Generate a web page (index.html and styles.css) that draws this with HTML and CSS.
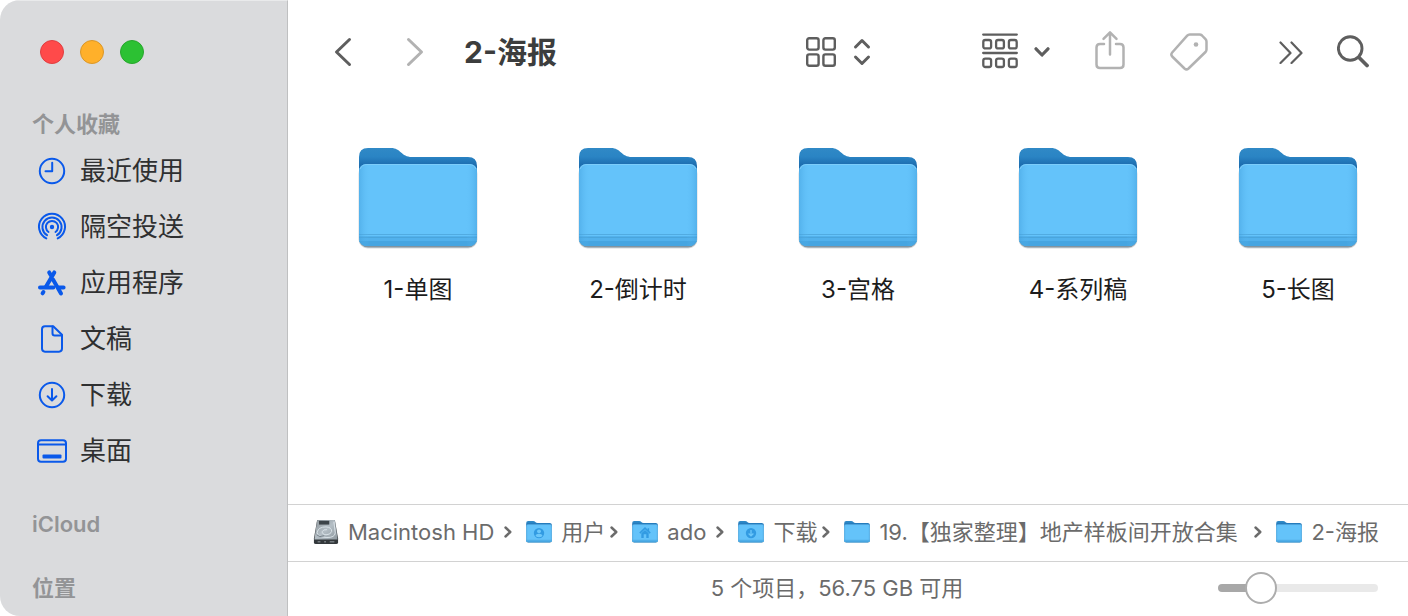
FILE: index.html
```html
<!DOCTYPE html>
<html lang="zh-CN">
<head>
    <meta charset="UTF-8" />
    <meta name="viewport" content="width=device-width, initial-scale=1" />
    <title>2-海报</title>
    <link rel="stylesheet" href="styles.css">
</head>
<body>
    <!-- shared icons -->
    <svg class="defs" width="0" height="0" aria-hidden="true">
        <defs>
            <linearGradient id="folderBack" x1="0" y1="0" x2="0" y2="1">
                <stop offset="0" stop-color="#3089c6" />
                <stop offset="0.3" stop-color="#2a84c4" />
                <stop offset="0.6" stop-color="#1c6cae" />
            </linearGradient>
            <linearGradient id="folderEdge" x1="0" y1="0" x2="1" y2="0">
                <stop offset="0" stop-color="#429fdc" stop-opacity="0.5" />
                <stop offset="0.09" stop-color="#5fbef6" stop-opacity="0" />
                <stop offset="0.91" stop-color="#5fbef6" stop-opacity="0" />
                <stop offset="1" stop-color="#429fdc" stop-opacity="0.5" />
            </linearGradient>
            <linearGradient id="diskTop" x1="0" y1="0" x2="1" y2="1">
                <stop offset="0" stop-color="#8c9499" />
                <stop offset="0.5" stop-color="#b4bec5" />
                <stop offset="1" stop-color="#8e989f" />
            </linearGradient>
        </defs>
        <symbol id="folder" viewBox="0 0 120 104">
            <rect x="0.500" y="18" width="119" height="83.500" rx="9" fill="#5f6c75" opacity="0.25" />
            <rect x="1" y="18" width="118" height="82.600" rx="9" fill="#48657a" opacity="0.6" />
            <path d="M1 28V10Q1 1 10 1H33C43 1 43 10 54 10H110Q119 10 119 19V30Z" fill="url(#folderBack)" />
            <path d="M1 25Q1 17 9 17H111Q119 17 119 25V90Q119 99 110 99H10Q1 99 1 90Z" fill="#64c3fa" />
            <path d="M1 89H119V90Q119 99 110 99H10Q1 99 1 90Z" fill="#52b1ec" />
            <path d="M1 94H119Q117 99 110 99H10Q3 99 1 94Z" fill="#46a5e1" />
            <path d="M1 87.500H119M1 90.500H119" stroke="#479fd5" stroke-width="1" opacity="0.65" />
            <path d="M1 25Q1 17 9 17H111Q119 17 119 25V90Q119 99 110 99H10Q1 99 1 90Z" fill="url(#folderEdge)" />
            <path d="M2 22Q4 17.500 9 17.500H111Q116 17.500 118 22" fill="none" stroke="#7ccdfb" stroke-width="1" />
        </symbol>
        <symbol id="sep" viewBox="0 0 8 12">
            <path d="M1.500 1.500L6.300 6L1.500 10.500" fill="none" stroke="currentColor" stroke-width="2.400" stroke-linecap="round" stroke-linejoin="round" />
        </symbol>
    </svg>

    <div class="window">
        <aside class="sidebar">
            <div class="lights">
                <button type="button" class="light close" aria-label="关闭"></button>
                <button type="button" class="light minimize" aria-label="最小化"></button>
                <button type="button" class="light zoom" aria-label="缩放"></button>
            </div>
            <h2>个人收藏</h2>
            <nav class="places">
                <a href="#">
                    <svg class="icon" viewBox="0 0 32 32"><circle cx="16" cy="16" r="12.200" /><path d="M16.200 7.800V16.300H9.500" /></svg>
                    最近使用
                </a>
                <a href="#">
                    <svg class="icon" viewBox="0 0 32 32">
                        <circle class="solid" cx="16" cy="16" r="2.200" />
                        <path d="M10.300 27.400A13 13 0 1 1 21.700 27.400" />
                        <path d="M11 24.200A9.600 9.600 0 1 1 21 24.200" />
                        <path d="M12.500 21A6.100 6.100 0 1 1 19.500 21" />
                    </svg>
                    隔空投送
                </a>
                <a href="#">
                    <svg class="icon" viewBox="0 0 32 32">
                        <path class="bold" d="M18.300 5.400L9.800 20M13.200 5.400L15.300 9M17 12.500L25 26.400" />
                        <path class="bold" d="M4 20.500H17.300M23 20.500H27.600M7.400 25L6.600 26.300" />
                    </svg>
                    应用程序
                </a>
                <a href="#">
                    <svg class="icon" viewBox="0 0 32 32"><path d="M9 3.300H17.200L26 11.800V25.600Q26 28.700 23 28.700H9Q6 28.700 6 25.600V6.300Q6 3.300 9 3.300Z" /><path d="M16.500 3.600V10.300Q16.500 12.500 18.700 12.500H25.700" /></svg>
                    文稿
                </a>
                <a href="#">
                    <svg class="icon" viewBox="0 0 32 32"><circle cx="16" cy="16" r="12.200" /><path d="M16 10V21.300M11.600 17.200L16 21.500L20.400 17.200" /></svg>
                    下载
                </a>
                <a href="#">
                    <svg class="icon" viewBox="0 0 32 32"><rect x="2" y="5.200" width="28" height="21.600" rx="3" /><path d="M2 9.500H30" /><rect class="solid" x="6.500" y="19.500" width="19" height="4" rx="1" /></svg>
                    桌面
                </a>
            </nav>
            <h2>iCloud</h2>
            <h2>位置</h2>
        </aside>

        <main class="content">
            <header class="toolbar">
                <div class="history">
                    <button type="button" aria-label="后退"><svg width="18" height="30" viewBox="0 0 18 30"><path d="M15.500 2.500L2.500 15L15.500 27.500" stroke-width="3" /></svg></button>
                    <button type="button" class="dim" aria-label="前进"><svg width="18" height="30" viewBox="0 0 18 30"><path d="M2.500 2.500L15.500 15L2.500 27.500" stroke-width="3" /></svg></button>
                </div>
                <h1>2-海报</h1>
                <button type="button" class="view" aria-label="显示方式">
                    <svg width="32" height="32" viewBox="0 0 32 32" stroke-width="2.400">
                        <rect x="2.200" y="2.200" width="11.400" height="11.400" rx="2" /><rect x="18.400" y="2.200" width="11.400" height="11.400" rx="2" />
                        <rect x="2.200" y="18.400" width="11.400" height="11.400" rx="2" /><rect x="18.400" y="18.400" width="11.400" height="11.400" rx="2" />
                    </svg>
                    <svg width="18" height="28" viewBox="0 0 18 28" stroke-width="3"><path d="M2.500 9L9 2.500L15.500 9M2.500 19L9 25.500L15.500 19" /></svg>
                </button>
                <div class="tools">
                    <button type="button" class="group" aria-label="分组">
                        <svg width="36" height="38" viewBox="0 0 36 38" stroke-width="2.300">
                            <path d="M1.200 1.600H34.800M1.200 20H34.800" />
                            <rect x="1.300" y="7" width="7.800" height="8.400" rx="2" /><rect x="14.100" y="7" width="7.800" height="8.400" rx="2" /><rect x="26.900" y="7" width="7.800" height="8.400" rx="2" />
                            <rect x="1.300" y="25.600" width="7.800" height="8.400" rx="2" /><rect x="14.100" y="25.600" width="7.800" height="8.400" rx="2" /><rect x="26.900" y="25.600" width="7.800" height="8.400" rx="2" />
                        </svg>
                        <svg width="16" height="12" viewBox="0 0 16 12" stroke-width="3.200"><path d="M2 2.800L8 9L14 2.800" /></svg>
                    </button>
                    <button type="button" class="dim" aria-label="共享">
                        <svg width="30" height="44" viewBox="0 0 30 44" stroke-width="2.500"><path d="M9 14H5Q1.500 14 1.500 17.500V34.500Q1.500 38 5 38H25Q28.500 38 28.500 34.500V17.500Q28.500 14 25 14H21M15 24.500V2.500M8.500 8.800L15 2.300L21.500 8.800" /></svg>
                    </button>
                    <button type="button" class="dim" aria-label="标签">
                        <svg width="38" height="42" viewBox="0 0 38 42" stroke-width="2.500"><path d="M19.800 3.500H29.500Q31 3.500 32 4.500L35.500 8.200Q36.500 9.300 36.500 10.700V18.500Q36.500 20 35.500 21L18.500 37.500Q16.500 39.200 14.500 37.500L2.200 25.500Q.500 23.500 2.200 21.500L17.200 4.700Q18.300 3.500 19.800 3.500Z" /><circle class="dot" cx="26" cy="13.500" r="2.300" /></svg>
                    </button>
                </div>
                <button type="button" class="more" aria-label="更多"><svg width="24" height="24" viewBox="0 0 24 24" stroke-width="2.200"><path d="M1.500 2.500L11.500 13L1.500 23M12.500 2.500L22.500 13L12.500 23" /></svg></button>
                <button type="button" aria-label="搜索"><svg width="32" height="34" viewBox="0 0 32 34"><circle cx="13.200" cy="13.500" r="11.800" stroke-width="2.900" /><path d="M22 22.500L30 30.500" stroke-width="3.800" /></svg></button>
            </header>

            <section class="files">
                <a href="#"><svg class="folder"><use href="#folder" /></svg>1-单图</a>
                <a href="#"><svg class="folder"><use href="#folder" /></svg>2-倒计时</a>
                <a href="#"><svg class="folder"><use href="#folder" /></svg>3-宫格</a>
                <a href="#"><svg class="folder"><use href="#folder" /></svg>4-系列稿</a>
                <a href="#"><svg class="folder"><use href="#folder" /></svg>5-长图</a>
            </section>

            <nav class="pathbar">
                <a href="#">
                    <svg class="disk" viewBox="0 0 28 28">
                        <path d="M4.500 1H23.500L27 21V25Q27 27 25 27H3Q1 27 1 25V21Z" fill="#33383b" />
                        <path d="M4.500 1H23.500L26.500 22H1.500Z" fill="url(#diskTop)" />
                        <rect x="6.500" y="2" width="11" height="4" fill="#3c4348" />
                        <path d="M22.500 3L24 15Q23.500 20 15 20Q4.500 19.500 4.500 14.500Q5.500 8.500 14 8.500Q20.500 9 20 13.500Q19 17 14 17Q9.500 16.500 10 13.500Q11 11 15 11.500" fill="none" stroke="#dce5ea" stroke-width="1" />
                        <path d="M4 17Q7 20.500 12 18" fill="none" stroke="#6f7b83" stroke-width="1" />
                        <path d="M5 24.500H8M12 24.500H14M18 24.500H23" stroke="#747b80" stroke-width="1.500" />
                    </svg>
                    Macintosh HD
                </a>
                <svg class="sep"><use href="#sep" /></svg>
                <a href="#">
                    <svg class="mini" viewBox="0 0 120 104">
                        <use href="#folder" />
                        <circle cx="60" cy="57" r="24" fill="#329be2" /><circle cx="60" cy="49" r="9" fill="#6dc8fa" /><path d="M44 71Q46 60 60 60T76 71Q60 82 44 71Z" fill="#6dc8fa" />
                    </svg>
                    用户
                </a>
                <svg class="sep tight"><use href="#sep" /></svg>
                <a href="#">
                    <svg class="mini" viewBox="0 0 120 104">
                        <use href="#folder" />
                        <path d="M36 57L60 34L84 57" fill="none" stroke="#329be2" stroke-width="7" /><path d="M43 58L60 43L77 58V80H66V62H54V80H43ZM72 35H79V48H72Z" fill="#329be2" />
                    </svg>
                    ado
                </a>
                <svg class="sep"><use href="#sep" /></svg>
                <a href="#">
                    <svg class="mini" viewBox="0 0 120 104">
                        <use href="#folder" />
                        <circle cx="60" cy="57" r="24" fill="#329be2" /><path d="M60 43V69M49 59L60 70L71 59" fill="none" stroke="#6dc8fa" stroke-width="6" />
                    </svg>
                    下载
                </a>
                <svg class="sep tight"><use href="#sep" /></svg>
                <a href="#"><svg class="mini"><use href="#folder" /></svg>19.【独家整理】地产样板间开放合集</a>
                <svg class="sep"><use href="#sep" /></svg>
                <a href="#"><svg class="mini"><use href="#folder" /></svg>2-海报</a>
            </nav>

            <footer class="statusbar">
                <p>5 个项目，56.75 GB 可用</p>
                <input type="range" min="0" max="100" value="21" aria-label="图标大小" />
            </footer>
        </main>
    </div>
</body>
</html>
```

FILE: styles.css
```css
* {
    margin: 0;
    padding: 0;
    box-sizing: border-box;
}
body {
    background: #fff;
    font-family: Inter, "Noto Sans CJK SC", sans-serif;
}
a {
    color: inherit;
    text-decoration: none;
}
button {
    border: none;
    background: none;
    color: #5e5e5e;
    cursor: pointer;
}
svg {
    display: block;
    flex: none;
}
.defs {
    position: absolute;
}
.window {
    display: flex;
    min-height: 100vh;
    border-radius: 20px 0 0 20px;
    overflow: hidden;
}

/* sidebar */
.sidebar {
    flex: none;
    width: 288px;
    padding: 39px 32px 8px;
    background: #dadbdd;
    border-top: 1px solid #e9eaeb;
    border-right: 1px solid #bfc0c1;
}
.lights {
    display: flex;
    gap: 16px;
    padding: 0 8px;
    margin-bottom: 41px;
}
.light {
    width: 24px;
    height: 24px;
    border-radius: 50%;
    border: 1px solid;
}
.close {
    background: #ff4a4a;
    border-color: #df3e40;
}
.minimize {
    background: #ffb02a;
    border-color: #da9728;
}
.zoom {
    background: #2cc133;
    border-color: #27a62c;
}
.sidebar h2 {
    font-size: 22px;
    font-weight: 600;
    line-height: 38px;
    color: #939496;
}
.sidebar h2 + h2,
.places + h2 {
    margin-top: 26px;
}
.places a {
    display: flex;
    align-items: center;
    gap: 12px;
    height: 56px;
    padding-left: 4px;
    font-size: 26px;
    line-height: 32px;
    color: #2f3031;
}
.icon {
    width: 32px;
    height: 32px;
    fill: none;
    stroke: #0a59ea;
    stroke-width: 2;
    stroke-linecap: round;
    stroke-linejoin: round;
}
.icon .solid {
    fill: #0a59ea;
    stroke: none;
}
.icon .bold {
    stroke-width: 4;
}

/* toolbar */
.content {
    flex: 1;
    min-width: 0;
    display: flex;
    flex-direction: column;
}
.toolbar {
    display: flex;
    align-items: center;
    height: 103px;
    padding: 0 39px 0 46px;
}
.toolbar svg {
    fill: none;
    stroke: currentColor;
    stroke-linecap: round;
    stroke-linejoin: round;
}
.toolbar svg .dot {
    fill: currentColor;
    stroke: none;
}
.toolbar .dim {
    color: #b2b2b2;
}
.history {
    display: flex;
    gap: 54px;
}
.toolbar h1 {
    margin-left: 40px;
    font-size: 30px;
    font-weight: 700;
    line-height: 38px;
    color: #3c3d3d;
}
.view,
.group {
    display: flex;
    align-items: center;
    gap: 16px;
}
.view {
    margin-left: auto;
}
.tools {
    display: flex;
    align-items: center;
    gap: 45px;
    margin: 0 71px 0 111px;
}
.more {
    margin-right: 34px;
}

/* folders */
.files {
    flex: 1;
    display: grid;
    grid-template-columns: repeat(auto-fill, 220px);
    align-content: start;
    padding: 44px 0 0 20px;
}
.files a {
    display: flex;
    flex-direction: column;
    align-items: center;
    gap: 20px;
    font-size: 24px;
    line-height: 38px;
    color: #1c1c1c;
}
.folder {
    width: 120px;
    height: 104px;
}

/* bottom bars */
.pathbar {
    display: flex;
    align-items: center;
    height: 57px;
    padding: 0 29px 2px 25px;
    border-top: 1px solid #d2d2d2;
    font-size: 22px;
    line-height: 28px;
    color: #6b6b6b;
    white-space: nowrap;
}
.pathbar a {
    display: flex;
    align-items: center;
    gap: 9px;
}
.disk {
    width: 26px;
    height: 28px;
}
.mini {
    width: 26px;
    height: 24px;
}
.sep {
    width: 8px;
    height: 12px;
    margin: 0 14px 0 10px;
}
.sep.tight {
    margin-left: 5px;
}
.sep:last-of-type {
    margin-left: auto;
}
.statusbar {
    display: grid;
    grid-template-columns: 1fr auto 1fr;
    align-items: center;
    height: 55px;
    padding: 0 30px 2px 8px;
    border-top: 1px solid #d2d2d2;
    font-size: 22px;
    line-height: 28px;
    color: #6b6b6b;
}
.statusbar p {
    grid-column: 2;
}
.statusbar input {
    appearance: none;
    justify-self: end;
    width: 160px;
    height: 8px;
    border-radius: 4px;
    background: linear-gradient(to right, #a8a8a8 27%, #e9e9e9 27%);
}
.statusbar input::-webkit-slider-thumb {
    appearance: none;
    width: 32px;
    height: 32px;
    border: 2px solid #adadad;
    border-radius: 50%;
    background: #fff;
}
```
